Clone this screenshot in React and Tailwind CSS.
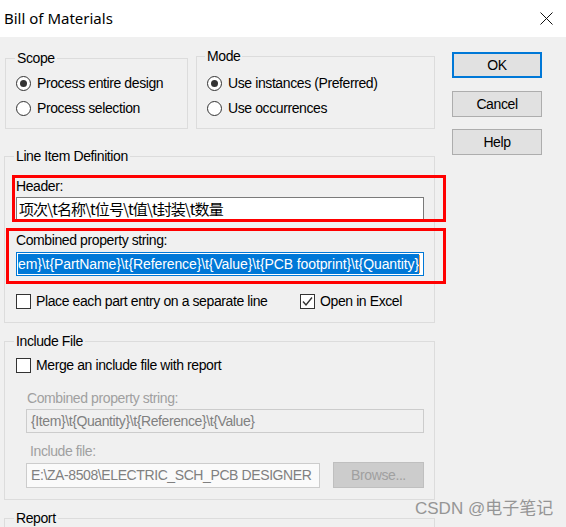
import React from "react";

const UI = "font-['Liberation_Sans',Arial,sans-serif] tracking-[-0.4px]";

function Radio({ checked }) {
  return (
    <span className="w-[15px] h-[15px] rounded-full border border-[#333333] bg-white flex items-center justify-center shrink-0">
      {checked && <span className="w-[7px] h-[7px] rounded-full bg-[#333333]" />}
    </span>
  );
}

function Check({ checked }) {
  return (
    <span className="w-[15px] h-[15px] border border-[#333333] bg-white flex items-center justify-center shrink-0">
      {checked && (
        <svg width="13" height="13" viewBox="0 0 13 13">
          <path d="M2 6.5 L5 10 L11 2.5" fill="none" stroke="#333333" strokeWidth="1.4" />
        </svg>
      )}
    </span>
  );
}

function Btn({ children, focus, disabled, className = "" }) {
  return (
    <div
      className={
        "flex items-center justify-center text-[14px] leading-[16px] " +
        (focus
          ? "border-2 border-[#0078d7] bg-[#e1e1e1] text-black "
          : disabled
          ? "border border-[#bfbfbf] bg-[#cccccc] text-[#a0a0a0] "
          : "border border-[#adadad] bg-[#e1e1e1] text-black ") +
        className
      }
    >
      {children}
    </div>
  );
}

export default function App() {
  return (
    <div className={"relative w-[566px] h-[527px] overflow-hidden bg-[#f0f0f0] text-black " + UI}>
      {/* Title bar */}
      <div className="h-[37px] bg-white flex items-center justify-between">
        <span className="ml-[4px] mb-[2px] text-[15px] leading-[18px] tracking-normal font-['Noto_Sans',sans-serif] text-black">
          Bill of Materials
        </span>
        <svg className="mr-[13px]" width="13" height="13" viewBox="0 0 13 13">
          <path d="M0.5 0.5 L12.5 12.5 M12.5 0.5 L0.5 12.5" stroke="#111" strokeWidth="1" />
        </svg>
      </div>

      <div className="flex">
        {/* Left column */}
        <div className="w-[436px] flex flex-col">
          <div className="flex items-start">
            <fieldset className="ml-[5px] mt-[13px] w-[183px] h-[79px] border border-[#dcdcdc]">
              <legend className="ml-[9px] px-[2px] text-[14px] leading-[16px]">Scope</legend>
              <div className="pl-[10px] flex flex-col text-[14px] leading-[16px]">
                <div className="mt-[9px] flex items-center gap-[6px]">
                  <Radio checked />
                  <span>Process entire design</span>
                </div>
                <div className="mt-[9px] flex items-center gap-[6px]">
                  <Radio />
                  <span>Process selection</span>
                </div>
              </div>
            </fieldset>
            <fieldset className="ml-[8px] mt-[11px] w-[239px] h-[81px] border border-[#dcdcdc]">
              <legend className="ml-[8px] px-[2px] text-[14px] leading-[16px]">Mode</legend>
              <div className="pl-[10px] flex flex-col text-[14px] leading-[16px]">
                <div className="mt-[11px] flex items-center gap-[6px]">
                  <Radio checked />
                  <span>Use instances (Preferred)</span>
                </div>
                <div className="mt-[9px] flex items-center gap-[6px]">
                  <Radio />
                  <span>Use occurrences</span>
                </div>
              </div>
            </fieldset>
          </div>

          {/* Line Item Definition */}
          <fieldset className="ml-[4px] mt-[19px] w-[431px] h-[175px] border border-[#dcdcdc]">
            <legend className="ml-[9px] px-[2px] text-[14px] leading-[16px]">Line Item Definition</legend>
            <div className="pl-[11px] flex flex-col text-[14px] leading-[16px]">
              <div className="mt-[14px]">Header:</div>
              <div className="mt-[3px] w-[408px] h-[24px] border border-[#7a7a7a] bg-white flex items-center pl-[2px] overflow-hidden whitespace-nowrap text-[15px] leading-[20px] tracking-[-0.9px] font-['Noto_Sans_CJK_SC',sans-serif]">
                项次\t名称\t位号\t值\t封装\t数量
              </div>
              <div className="mt-[11px]">Combined property string:</div>
              <div className="mt-[4px] w-[408px] h-[24px] border border-[#0078d7] bg-white flex items-center pl-[1px] overflow-hidden whitespace-nowrap tracking-[-0.1px]">
                <span className="bg-[#0078d7] text-white leading-[20px]">
                  em}\t{"{"}PartName{"}"}\t{"{"}Reference{"}"}\t{"{"}Value{"}"}\t{"{"}PCB footprint{"}"}\t{"{"}Quantity{"}"}
                </span>
                <span className="w-[1px] h-[18px] bg-[#f0a050] shrink-0" />
              </div>
              <div className="mt-[17px] flex items-center">
                <div className="w-[284px] flex items-center gap-[5px]">
                  <Check />
                  <span>Place each part entry on a separate line</span>
                </div>
                <div className="flex items-center gap-[5px]">
                  <Check checked />
                  <span>Open in Excel</span>
                </div>
              </div>
            </div>
          </fieldset>

          {/* Include File */}
          <fieldset className="ml-[4px] mt-[10px] w-[431px] h-[167px] border border-[#dcdcdc]">
            <legend className="ml-[9px] px-[2px] text-[14px] leading-[16px]">Include File</legend>
            <div className="pl-[11px] flex flex-col text-[14px] leading-[16px]">
              <div className="mt-[8px] flex items-center gap-[5px]">
                <Check />
                <span>Merge an include file with report</span>
              </div>
              <div className="mt-[17px] ml-[11px] text-[#a0a0a0]">Combined property string:</div>
              <div className="mt-[3px] ml-[10px] w-[398px] h-[24px] border border-[#cccccc] bg-[#f0f0f0] flex items-center pl-[4px] text-[#808080] whitespace-nowrap overflow-hidden">
                {"{"}Item{"}"}\t{"{"}Quantity{"}"}\t{"{"}Reference{"}"}\t{"{"}Value{"}"}
              </div>
              <div className="mt-[10px] ml-[14px] text-[#a0a0a0]">Include file:</div>
              <div className="mt-[3px] ml-[10px] flex items-center gap-[13px]">
                <div className="w-[294px] h-[25px] border border-[#cccccc] bg-[#fafafa] flex items-center pl-[4px] text-[#808080] whitespace-nowrap overflow-hidden">
                  E:\ZA-8508\ELECTRIC_SCH_PCB DESIGNER
                </div>
                <Btn disabled className="w-[91px] h-[26px]">
                  Browse...
                </Btn>
              </div>
            </div>
          </fieldset>

          {/* Report */}
          <fieldset className="ml-[4px] mt-[10px] w-[431px] h-[120px] border border-[#dcdcdc]">
            <legend className="ml-[9px] px-[2px] text-[14px] leading-[16px]">Report</legend>
          </fieldset>
        </div>

        {/* Right column buttons */}
        <div className="pl-[16px] flex flex-col">
          <Btn focus className="mt-[15px] w-[90px] h-[26px]">OK</Btn>
          <Btn className="mt-[13px] w-[90px] h-[26px]">Cancel</Btn>
          <Btn className="mt-[12px] w-[90px] h-[26px]">Help</Btn>
        </div>
      </div>

      {/* Annotation boxes */}
      <div className="absolute left-[12px] top-[175px] w-[434px] h-[47px] border-[3px] border-[#ff0000] pointer-events-none" />
      <div className="absolute left-[6px] top-[228px] w-[440px] h-[56px] border-[3px] border-[#ff0000] pointer-events-none" />

      {/* Watermark */}
      <div className="absolute left-[415px] top-[498px] text-[17px] leading-[22px] tracking-normal text-[#8c8c8c] opacity-90 whitespace-nowrap font-['Liberation_Sans','Noto_Sans_CJK_SC',sans-serif]">
        CSDN @电子笔记
      </div>
    </div>
  );
}
